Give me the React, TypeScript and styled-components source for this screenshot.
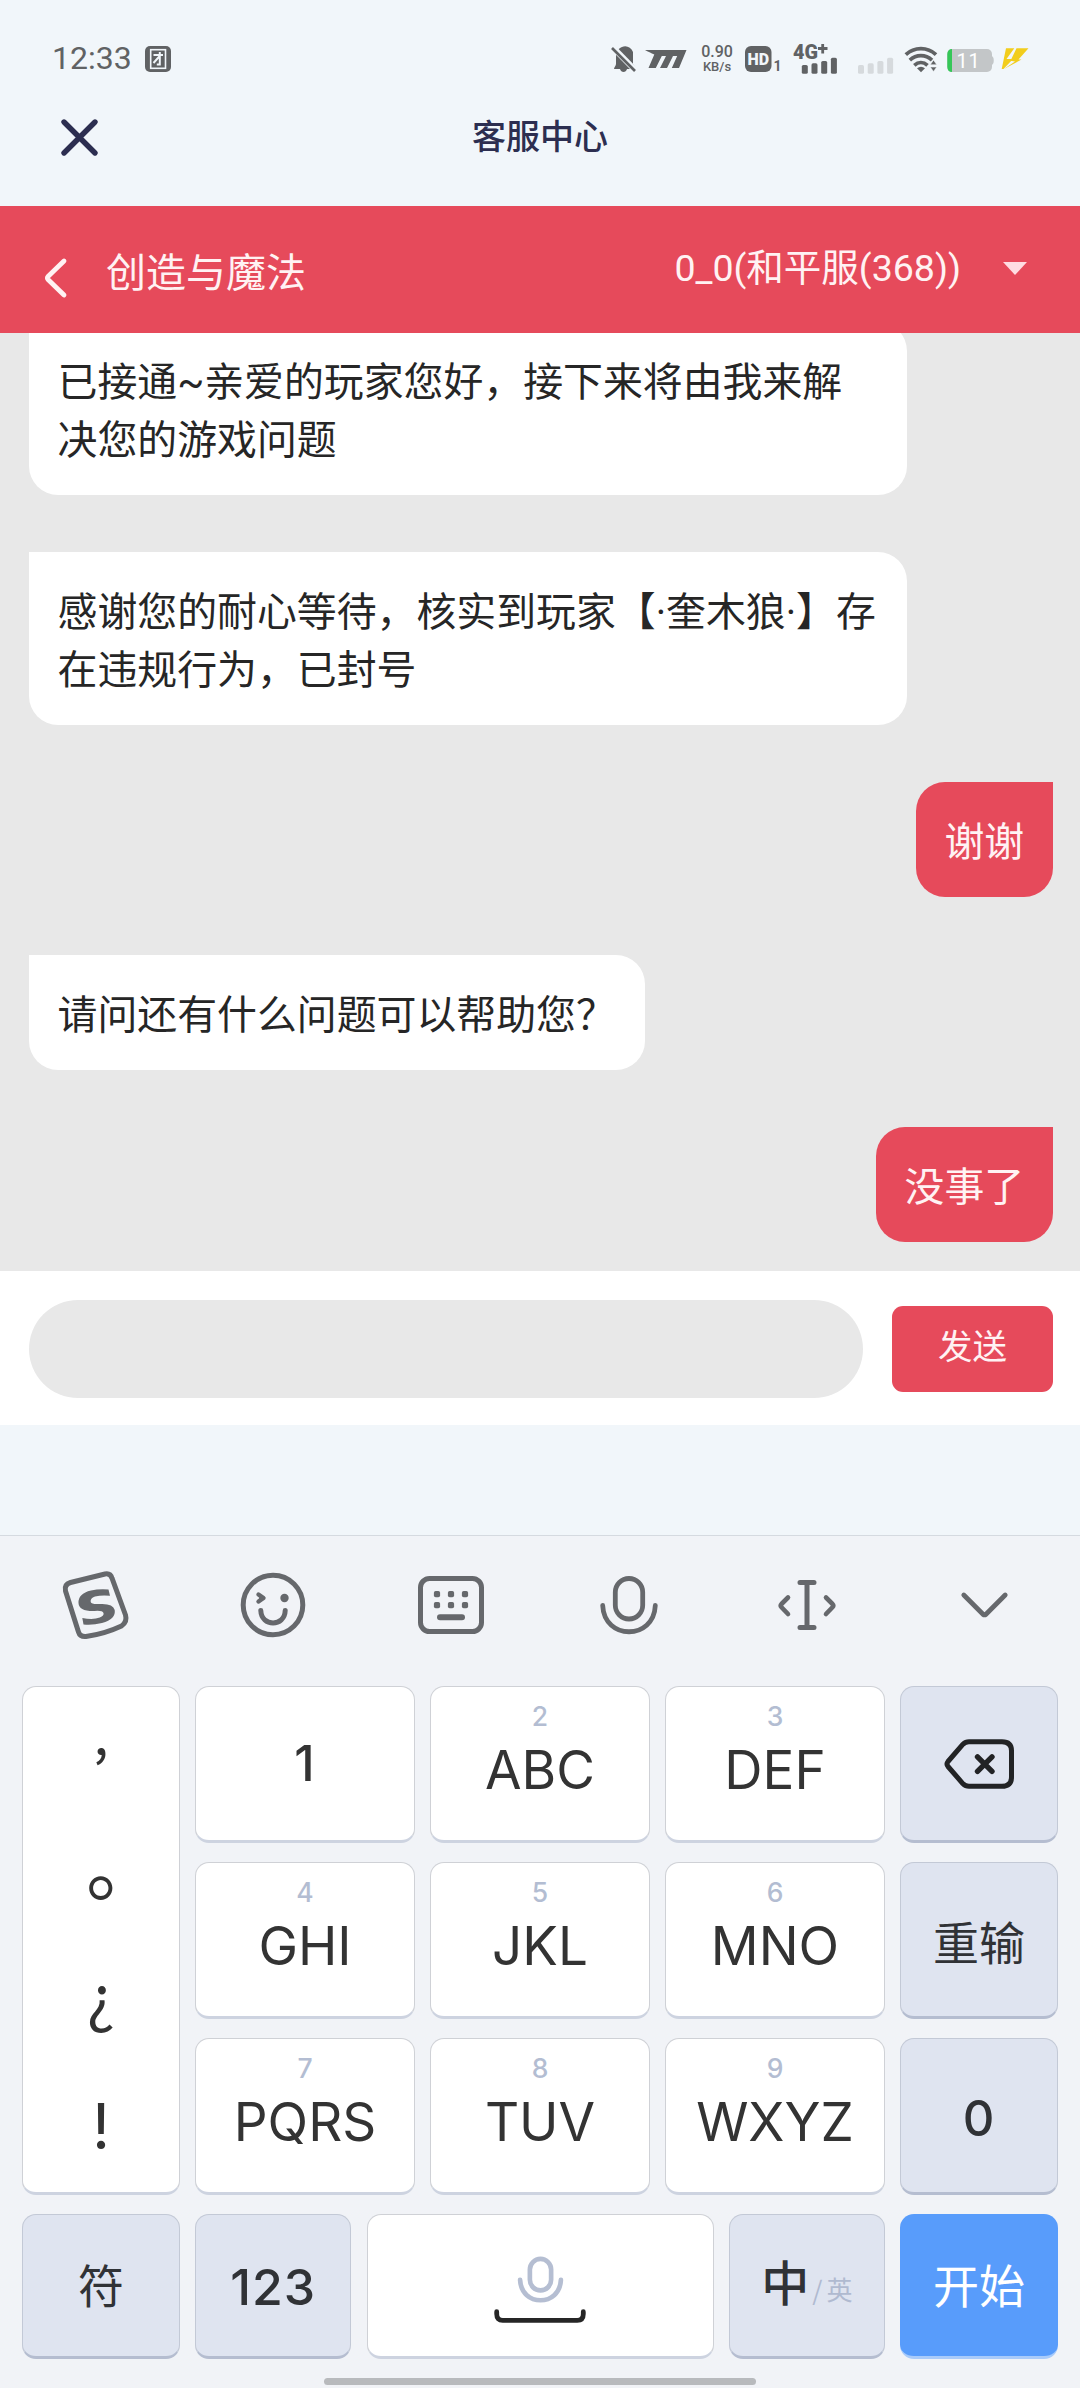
import React from "react";
import styled, { createGlobalStyle } from "styled-components";

const cjk = `"Noto Sans CJK SC", sans-serif`;

const GlobalStyle = createGlobalStyle`
  * { box-sizing: border-box; }
  body {
    margin: 0;
    background: #f1f6fa;
    font-family: Roboto, ${cjk};
  }
  svg { display: block; flex: none; overflow: visible; }
`;

const Screen = styled.main`
  display: flex;
  flex-direction: column;
  width: 1080px;
  height: 2388px;
  overflow: hidden;
  background: #f1f6fa;
`;

/* ---------- status bar ---------- */

const StatusBar = styled.div`
  display: flex;
  align-items: center;
  justify-content: space-between;
  height: 118px;
  flex: none;
  padding: 0 53px 0 52px;
  color: #606264;
`;

const StatusGroup = styled.div`
  display: flex;
  align-items: center;
`;

const Clock = styled.span`
  font-size: 32px;
  line-height: 36px;
  margin: -2px 13px 0 0;
`;

const Speed = styled.div`
  display: flex;
  flex-direction: column;
  align-items: center;
  width: 36px;
  margin: 0 10px 0 12px;
  font-weight: 500;
  font-size: 16px;
  line-height: 15px;
  white-space: nowrap;
`;

const SpeedUnit = styled.span`
  font-size: 13px;
  line-height: 15px;
`;

/* ---------- title bar ---------- */

const TitleBar = styled.header`
  display: grid;
  grid-template-columns: 158px 1fr 158px;
  grid-template-rows: 38px;
  align-items: center;
  height: 88px;
  flex: none;
`;

const CloseButton = styled.button`
  border: 0;
  background: none;
  padding: 0 0 0 61px;
`;

const Title = styled.h1`
  margin: 0;
  padding-bottom: 4px;
  text-align: center;
  font: 500 34px/40px ${cjk};
  color: #2c2e50;
`;

/* ---------- game header ---------- */

const GameHeader = styled.section`
  display: flex;
  align-items: flex-start;
  height: 127px;
  flex: none;
  padding: 0 53px 0 44px;
  background: #e64a5b;
  color: #fff2f3;
`;

const BackIcon = styled.svg`
  margin-top: 52px;
`;

const GameName = styled.span`
  margin: 39px 0 0 39px;
  font-size: 40px;
  line-height: 58px;
`;

const ServerPicker = styled.div`
  display: flex;
  align-items: center;
  gap: 42px;
  margin: 33px 0 0 auto;
  font-size: 37.5px;
  line-height: 58px;
`;

/* ---------- chat ---------- */

const Chat = styled.section`
  display: flex;
  flex-direction: column;
  justify-content: flex-end;
  gap: 57.5px;
  height: 938px;
  flex: none;
  padding: 0 27px 28.75px 28.75px;
  overflow: hidden;
  background: #e8e8e8;
`;

const Bubble = styled.p<{ $mine?: boolean }>`
  flex: none;
  align-self: ${(p) => (p.$mine ? "flex-end" : "flex-start")};
  max-width: 878px;
  margin: 0;
  padding: 31.75px 28.75px 25.75px;
  border-radius: ${(p) => (p.$mine ? "29px 0 29px 29px" : "0 29px 29px 29px")};
  background: ${(p) => (p.$mine ? "#e64a5b" : "#fff")};
  color: ${(p) => (p.$mine ? "#fff2f3" : "#262626")};
  font-size: 39.88px;
  line-height: 57.5px;
`;

const Composer = styled.form`
  display: flex;
  align-items: center;
  gap: 29px;
  height: 154px;
  flex: none;
  padding: 2px 27px 0 29px;
  background: #fff;
`;

const MessageInput = styled.input`
  flex: 1;
  height: 98px;
  border: 0;
  border-radius: 49px;
  background: #e8e8e8;
`;

const SendButton = styled.button`
  width: 161px;
  height: 86px;
  padding: 0 0 10px;
  border: 0;
  border-radius: 11px;
  background: #e64a5b;
  color: #fff2f3;
  font: 400 34.5px/50px ${cjk};
`;

/* ---------- keyboard ---------- */

const Keyboard = styled.section`
  display: flex;
  flex-direction: column;
  align-items: center;
  flex: 1;
  margin-top: 110px;
  border-top: 1.5px solid #d5dae0;
  background: #f1f3f7;
`;

const Toolbar = styled.nav`
  display: grid;
  grid-template-columns: repeat(6, 177.8px);
  place-items: center;
  height: 137px;
  margin-bottom: 13px;
`;

const KeyGrid = styled.div`
  display: grid;
  grid-template-columns: 157.6px repeat(3, 219.6px) 157.6px;
  grid-template-rows: repeat(3, 157px);
  gap: 19px 15.4px;
`;

const BottomRow = styled.div`
  display: grid;
  grid-template-columns: 157.6px 156px 347px 156px 157.6px;
  grid-template-rows: 145px;
  gap: 15.4px;
  margin-top: 19px;
`;

type Tone = "light" | "dim" | "blue";

const tones: Record<Tone, string> = {
  light: "background:#fff;color:#333;border:1px solid #cfd1d6;border-bottom:3px solid #cdd3e0;",
  dim: "background:#dfe4f0;color:#303236;border:1px solid #c3c9d6;border-bottom:3px solid #b5bdd0;",
  blue: "background:#589cfb;color:#fff;border:0;border-bottom:3px solid #a9cbfa;",
};

const Key = styled.button<{ $tone?: Tone; $size?: number; $cn?: boolean; $pad?: string }>`
  display: flex;
  flex-direction: column;
  align-items: center;
  justify-content: center;
  padding: ${(p) => p.$pad ?? "0"};
  border-radius: 14px;
  ${(p) => tones[p.$tone ?? "light"]}
  font-family: ${(p) => (p.$cn ? cjk : `Inter, ${cjk}`)};
  font-size: ${(p) => p.$size ?? 49}px;
  line-height: 1;
`;

const DigitKey = styled(Key)`
  font-weight: 450;
  letter-spacing: 1px;
`;

const LetterKey = styled(Key)`
  justify-content: flex-start;
  padding-top: 14px;
  font-size: 53px;
  line-height: 54px;
`;

const Hint = styled.span`
  color: #b3bdd2;
  font-size: 26.5px;
  font-weight: 500;
  line-height: 30px;
  margin-bottom: 12px;
`;

const MarkColumn = styled(Key)`
  grid-row: span 3;
  justify-content: flex-start;
  padding-top: 6px;
`;

const Mark = styled.span<{ $size: number; $dx?: number; $dy: number; $cn?: boolean }>`
  display: flex;
  align-items: center;
  height: 122px;
  font-family: ${(p) => (p.$cn ? cjk : `Inter, ${cjk}`)};
  font-size: ${(p) => p.$size}px;
  transform: translate(${(p) => p.$dx ?? 0}px, ${(p) => p.$dy}px);
`;

const LanguageKey = styled(Key)`
  flex-direction: row;
  padding-bottom: 11px;
  font-weight: 500;
`;

const Alternate = styled.span`
  color: #b0bad0;
  font-size: 26px;
  font-weight: 400;
  letter-spacing: 4px;
  margin: 17px -4px 0 3px;
`;

const SpaceKey = styled(Key)`
  gap: 7px;
  padding-top: 8px;
`;

const HomeBar = styled.div`
  width: 432px;
  height: 7px;
  margin-top: 19px;
  border-radius: 4px;
  background: #b8babd;
`;

/* ---------- drawings ---------- */

const stroke = (width: number, color = "#66686c") => ({
  fill: "none",
  stroke: color,
  strokeWidth: width,
  strokeLinecap: "round" as const,
  strokeLinejoin: "round" as const,
});

const TeamBadge = () => (
  <svg width="26" height="26" viewBox="0 0 26 26">
    <rect width="26" height="26" rx="5" fill="#606264" />
    <rect x="5.7" y="3.7" width="14.8" height="18.6" fill="none" stroke="#f1f6fa" strokeWidth="1.6" />
    <path d="M8.5 9h9.5M14.8 6v12.500h-3M14.300 10.500L8.500 17" fill="none" stroke="#f1f6fa" strokeWidth="2" />
  </svg>
);

const StatusIcons = () => (
  <StatusGroup>
    <svg width="76" height="28" viewBox="612 45 76 28" fill="#606264">
      <path d="M615 69c0-2 2-3 2-5v-7c0-6 3-9 6-10 4-2 9 0 11 5v12c1 2 3 3 3 5h-9c-1 4-6 4-7 0z" />
      <path d="M613 46.500L637.500 71.500" stroke="#f1f6fa" strokeWidth="6" />
      <path d="M613 48L636 71" stroke="#606264" strokeWidth="2.600" />
      <path d="M646 50h41.500l-7.500 18h-7.200l5.400-12h-4.200l-6 12h-7l6-12h-4.200l-6 12h-7.300l5.800-13.500c-3-1.500-6.500-3-9.300-4.500z" />
    </svg>
    <Speed>
      0.90
      <SpeedUnit>KB/s</SpeedUnit>
    </Speed>
    <svg width="282" height="32" viewBox="745 43 282 32" fill="#606264">
      <rect x="745" y="46" width="26.500" height="26" rx="6" />
      <text x="758.300" y="65" textAnchor="middle" fontFamily="Roboto" fontWeight="900" fontSize="16" fill="#f1f6fa">HD</text>
      <text x="773.500" y="71" fontFamily="Roboto" fontWeight="700" fontSize="14">1</text>
      <text x="793" y="58.500" fontFamily="Roboto" fontWeight="900" fontSize="20" textLength="25" lengthAdjust="spacingAndGlyphs">4G</text>
      <path d="M818 48.500h9.500M822.700 44v9.500" stroke="#606264" strokeWidth="2.800" />
      {[65, 63.3, 61, 57.7].map((y, i) => (
        <rect key={y} x={801.8 + i * 9.7} y={y} width="6" height={73.8 - y} rx="1.600" />
      ))}
      {[65, 63.3, 61, 57.7].map((y, i) => (
        <rect key={y} x={858 + i * 9.7} y={y} width="6" height={73.8 - y} rx="1.600" fill="#d6dadd" />
      ))}
      <g fill="none" stroke="#606264" strokeWidth="3.700">
        <path d="M905.800 54.700c8.500-8 21.700-8 30.200 0" />
        <path d="M909.800 60.200c6.500-6 15.700-6 22.200 0" />
        <path d="M914.300 65.300c4-3.600 9.200-3.600 13.200 0" />
      </g>
      <path d="M917 68.300c2.500-2 5.500-2 8 0l-4 4z" />
      <path d="M933.500 60l3.300 4.800h-6.600zM933.500 71.500l3.300-4.500h-6.600z" stroke="#f1f6fa" strokeWidth="0.600" />
      <rect x="947.300" y="49" width="44.700" height="23" rx="5" fill="#c3c6c8" />
      <path d="M991.500 56c3 0 3 9 0 9z" fill="#c3c6c8" />
      <path d="M952 49v23c-3 0-4.700-2-4.700-5V54c0-3 1.700-5 4.700-5z" fill="#35c758" />
      <text x="956.500" y="67.600" fontFamily="Roboto" fontSize="20" fill="#fff" letterSpacing="0.800">11</text>
      <path
        d="M1006 48.300h8.300L1006.500 59h6.500l-9.500 10h-1.800zM1016.500 48.300h12l-10 11.200h3L1004 69l11-7.500-4.500-.8z"
        fill="#f2cd1c"
      />
    </svg>
  </StatusGroup>
);

const CloseIcon = () => (
  <svg width="37" height="37" viewBox="0 0 37 37">
    <path d="M3 3l31 31M34 3L3 34" {...stroke(5.4, "#2c2e50")} />
  </svg>
);

const SogouIcon = () => (
  <svg width="68" height="68" viewBox="0 0 68 68">
    <path
      d="M8.500 11.500L43 3q5.500-1 7 4.200L63.500 44q2 7-4 11-17 8-35.500 10.500-6 .500-7.500-4.500L3.500 20q-1.500-6.500 5-8.500z"
      {...stroke(5)}
    />
    <path
      d="M46.500 18.500l1.500 6.300q-8-1-15 .7-5 1.800-4.300 5.500 1 2.500 8.300 2 14-1 15.700 6 1.500 9-12.700 13-9.500 2.300-18.500 1.400l-1.200-6.400q11 2 17.500-.5 4.500-2 3.700-4.500-1-2.700-9-2-15.500.500-16-8-.5-9.500 12.500-12.500 8-1.800 17.500-1z"
      fill="#66686c"
    />
  </svg>
);

const SmileIcon = () => (
  <svg width="66" height="66" viewBox="0 0 66 66">
    <circle cx="33" cy="33" r="29.800" {...stroke(5)} />
    <path d="M18.500 22.500l5 3.500-5 3.500M21 25v2" {...stroke(4.4)} />
    <circle cx="44.500" cy="26" r="4.200" fill="#66686c" />
    <path d="M20.800 38.500c.5 16.500 24 16.500 24.400 0" {...stroke(5)} />
  </svg>
);

const KeypadIcon = () => (
  <svg width="66" height="58" viewBox="0 0 66 58">
    <rect x="2.500" y="2.500" width="61" height="53" rx="9" {...stroke(5)} />
    {[19, 33, 47].map((x) => (
      <g key={x} fill="#66686c">
        <rect x={x - 3.1} y="15" width="6.200" height="6.200" rx="1.800" />
        <rect x={x - 3.1} y="26" width="6.200" height="6.200" rx="1.800" />
      </g>
    ))}
    <path d="M22 41.200h22" {...stroke(6)} />
  </svg>
);

const MicIcon = ({ width = 58, color = "#66686c", line = 4.8 }) => (
  <svg width={width} height={width} viewBox="0 0 58 58">
    <rect x="15.300" y="2.500" width="27.400" height="40.500" rx="13.700" {...stroke(line, color)} />
    <path d="M2.700 29.500c1.500 35 51.100 35 52.600 0" {...stroke(line, color)} />
  </svg>
);

const CursorIcon = () => (
  <svg width="58" height="50" viewBox="0 0 58 50">
    <path d="M22 2.500h14M22 47.500h14" {...stroke(5)} />
    <path d="M29 3v44" {...stroke(5)} />
    <path d="M10 17.500L3.500 24q-1.500 1.600 0 3.200l6.500 6.800M48 17.500l6.500 6.500q1.500 1.600 0 3.200L48 34" {...stroke(4.6)} />
  </svg>
);

const CollapseIcon = () => (
  <svg width="47" height="26" viewBox="0 0 47 26">
    <path d="M2.800 3l19.200 19.300q1.500 1.200 3 0L44.200 3" {...stroke(4.8)} />
  </svg>
);

const BackspaceIcon = () => (
  <svg width="70" height="50" viewBox="0 0 70 50">
    <path d="M25 2.700H58q9.500 0 9.500 9V38q0 9.300-9.500 9.300H25q-3.500 0-6-2.500L4 27.500q-2-2.500 0-5L19 5.200q2.500-2.500 6-2.500z" {...stroke(5, "#222325")} />
    <path d="M33.500 17.800l14.500 14.500M48 17.800L33.500 32.300" {...stroke(5.4, "#222325")} />
  </svg>
);

const SpaceIcon = () => (
  <svg width="92" height="14" viewBox="0 0 92 14">
    <path d="M2.700 2.700v2.300q0 6.300 6 6.300h74.600q6 0 6-6.300V2.700" {...stroke(4.8, "#262626")} />
  </svg>
);

const messages = [
  { text: "已接通~亲爱的玩家您好，接下来将由我来解决您的游戏问题" },
  { text: "感谢您的耐心等待，核实到玩家【·奎木狼·】存在违规行为，已封号" },
  { text: "谢谢", mine: true },
  { text: "请问还有什么问题可以帮助您？" },
  { text: "没事了", mine: true },
];

const Letters = ({ hint, label }: { hint: string; label: string }) => (
  <LetterKey>
    <Hint>{hint}</Hint>
    {label}
  </LetterKey>
);

export default function App() {
  return (
    <Screen>
      <GlobalStyle />
      <StatusBar>
        <StatusGroup>
          <Clock>12:33</Clock>
          <TeamBadge />
        </StatusGroup>
        <StatusIcons />
      </StatusBar>
      <TitleBar>
        <CloseButton aria-label="关闭"><CloseIcon /></CloseButton>
        <Title>客服中心</Title>
      </TitleBar>

      <GameHeader>
        <BackIcon width="23" height="40" viewBox="0 0 23 40">
          <path d="M20 3L4 18.500q-1.200 1.500 0 3L20 37" {...stroke(4.8, "#fff2f3")} />
        </BackIcon>
        <GameName>创造与魔法</GameName>
        <ServerPicker>
          0_0(和平服(368))
          <svg width="24" height="13" viewBox="0 0 24 13">
            <path d="M0 0h24L12 13z" fill="#ffdce2" />
          </svg>
        </ServerPicker>
      </GameHeader>

      <Chat>
        {messages.map((m) => (
          <Bubble key={m.text} $mine={m.mine}>{m.text}</Bubble>
        ))}
      </Chat>
      <Composer>
        <MessageInput />
        <SendButton type="button">发送</SendButton>
      </Composer>

      <Keyboard>
        <Toolbar>
          <SogouIcon />
          <SmileIcon />
          <KeypadIcon />
          <MicIcon />
          <CursorIcon />
          <CollapseIcon />
        </Toolbar>
        <KeyGrid>
          <MarkColumn as="div">
            <Mark $cn $size={54} $dy={-22}>,</Mark>
            <Mark $cn $size={76} $dx={23} $dy={-14}>。</Mark>
            <Mark $cn $size={60} $dy={-4}>¿</Mark>
            <Mark $size={63} $dy={6}>!</Mark>
          </MarkColumn>
          <DigitKey>1</DigitKey>
          <Letters hint="2" label="ABC" />
          <Letters hint="3" label="DEF" />
          <Key $tone="dim"><BackspaceIcon /></Key>
          <Letters hint="4" label="GHI" />
          <Letters hint="5" label="JKL" />
          <Letters hint="6" label="MNO" />
          <Key $tone="dim" $size={46} $cn>重输</Key>
          <Letters hint="7" label="PQRS" />
          <Letters hint="8" label="TUV" />
          <Letters hint="9" label="WXYZ" />
          <DigitKey $tone="dim" $pad="5px 0 0">0</DigitKey>
        </KeyGrid>
        <BottomRow>
          <Key $tone="dim" $size={46} $cn $pad="0 0 5px">符</Key>
          <DigitKey $tone="dim" $pad="2px 0 0" $size={50}>123</DigitKey>
          <SpaceKey>
            <MicIcon width={45} color="#b5bed2" line={6} />
            <SpaceIcon />
          </SpaceKey>
          <LanguageKey $tone="dim" $size={48} $cn>
            中<Alternate>/英</Alternate>
          </LanguageKey>
          <Key $tone="blue" $size={46} $cn $pad="0 0 5px">开始</Key>
        </BottomRow>
        <HomeBar />
      </Keyboard>
    </Screen>
  );
}
